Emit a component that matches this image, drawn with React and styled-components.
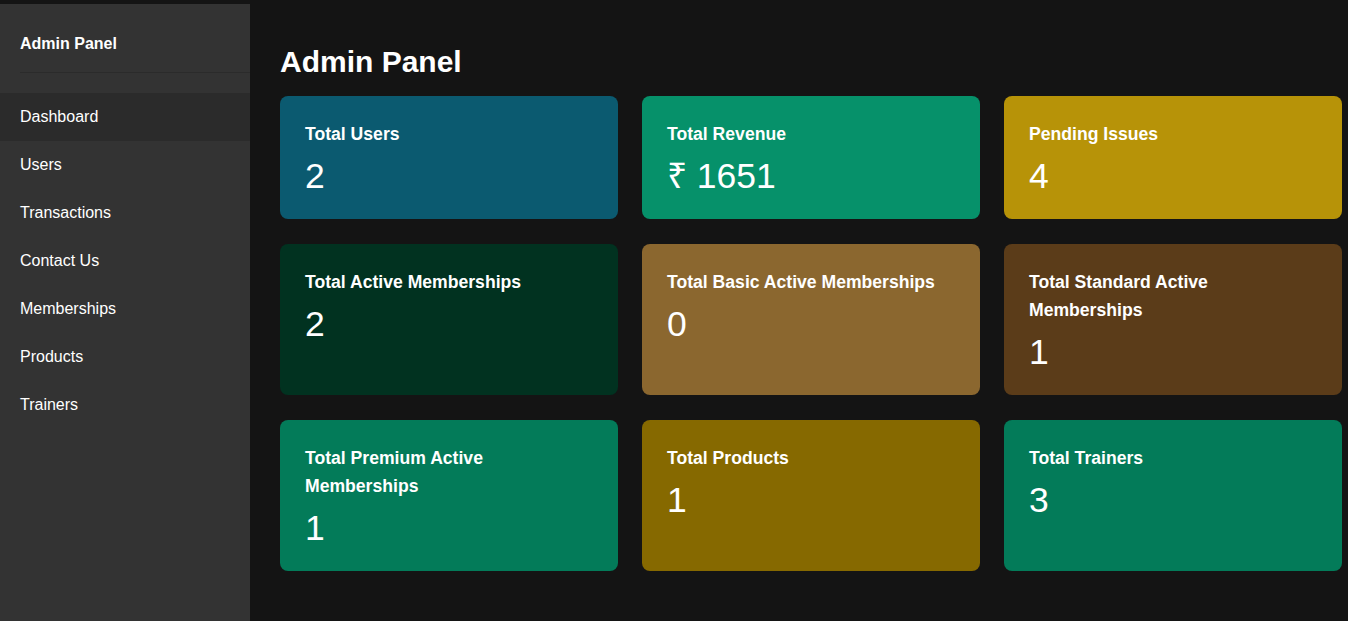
import React from 'react'
import styled, { createGlobalStyle } from 'styled-components'

const GlobalStyle = createGlobalStyle`
  html, body {
    margin: 0;
    padding: 0;
    background: #141414;
    font-family: "Liberation Sans", Arial, sans-serif;
    color: #fff;
  }
`

const Layout = styled.div`
  display: flex;
  min-height: 621px;
  padding-top: 4px;
  box-sizing: border-box;
  background: #141414;
`

const Sidebar = styled.aside`
  width: 250px;
  flex-shrink: 0;
  background: #333333;
  min-height: 617px;
`

const Brand = styled.div`
  margin-left: 20px;
  padding: 31px 0 19px;
  font-size: 16px;
  line-height: 18px;
  font-weight: bold;
  border-bottom: 1px solid #2b2b2b;
`

const Nav = styled.nav`
  margin-top: 20px;
  display: flex;
  flex-direction: column;
`

const NavItem = styled.a`
  display: block;
  height: 48px;
  line-height: 48px;
  padding-left: 20px;
  font-size: 16px;
  color: #fff;
  text-decoration: none;
  background: ${({ active }) => (active ? '#2b2b2b' : 'transparent')};
`

const Main = styled.main`
  flex: 1;
  padding: 0 6px 0 30px;
`

const Title = styled.h1`
  margin: 0;
  padding-top: 41px;
  font-size: 30px;
  line-height: 34px;
  font-weight: bold;
  height: 92px;
  box-sizing: border-box;
`

const Grid = styled.div`
  display: grid;
  grid-template-columns: repeat(3, 338px);
  column-gap: 24px;
  row-gap: 25px;
`

const Card = styled.div`
  background: ${({ bg }) => bg};
  border-radius: 8px;
  padding: 24px 25px 25px;
`

const CardTitle = styled.h3`
  margin: 0;
  font-size: 17.6px;
  line-height: 28px;
  font-weight: bold;
`

const CardValue = styled.p`
  margin: 10px 0 0;
  font-size: 35.5px;
  line-height: 36px;
`

const navLinks = ['Dashboard', 'Users', 'Transactions', 'Contact Us', 'Memberships', 'Products', 'Trainers']

const stats = [
  { title: 'Total Users', value: '2', bg: '#0b5a70' },
  { title: 'Total Revenue', value: '₹ 1651', bg: '#06916a' },
  { title: 'Pending Issues', value: '4', bg: '#b79308' },
  { title: 'Total Active Memberships', value: '2', bg: '#013220' },
  { title: 'Total Basic Active Memberships', value: '0', bg: '#8b672f' },
  { title: 'Total Standard Active Memberships', value: '1', bg: '#5b3c19' },
  { title: 'Total Premium Active Memberships', value: '1', bg: '#037b59' },
  { title: 'Total Products', value: '1', bg: '#866900' },
  { title: 'Total Trainers', value: '3', bg: '#037b59' },
]

const App = () => {
  return (
    <>
      <GlobalStyle />
      <Layout>
        <Sidebar>
          <Brand>Admin Panel</Brand>
          <Nav>
            {navLinks.map((link, i) => (
              <NavItem key={link} href="#" active={i === 0}>{link}</NavItem>
            ))}
          </Nav>
        </Sidebar>
        <Main>
          <Title>Admin Panel</Title>
          <Grid>
            {stats.map(stat => (
              <Card key={stat.title} bg={stat.bg}>
                <CardTitle>{stat.title}</CardTitle>
                <CardValue>{stat.value}</CardValue>
              </Card>
            ))}
          </Grid>
        </Main>
      </Layout>
    </>
  )
}

export default App
